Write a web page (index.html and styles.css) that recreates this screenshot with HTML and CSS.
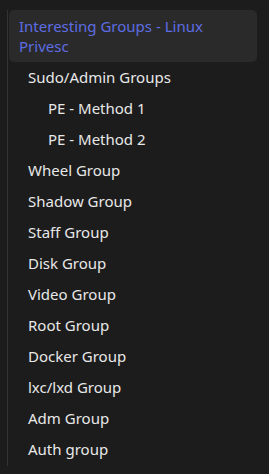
FILE: index.html
```html
<!DOCTYPE html>
<html lang="en">
<head>
    <meta charset="UTF-8">
    <title>Table of Contents</title>
    <link rel="stylesheet" href="styles.css">
</head>
<body>
<nav class="toc">
    <ul class="toc-list">
        <li><a class="toc-item active" href="#">Interesting Groups - Linux Privesc</a></li>
        <li><a class="toc-item lvl2" href="#">Sudo/Admin Groups</a></li>
        <li><a class="toc-item lvl3" href="#">PE - Method 1</a></li>
        <li><a class="toc-item lvl3" href="#">PE - Method 2</a></li>
        <li><a class="toc-item lvl2" href="#">Wheel Group</a></li>
        <li><a class="toc-item lvl2" href="#">Shadow Group</a></li>
        <li><a class="toc-item lvl2" href="#">Staff Group</a></li>
        <li><a class="toc-item lvl2" href="#">Disk Group</a></li>
        <li><a class="toc-item lvl2" href="#">Video Group</a></li>
        <li><a class="toc-item lvl2" href="#">Root Group</a></li>
        <li><a class="toc-item lvl2" href="#">Docker Group</a></li>
        <li><a class="toc-item lvl2" href="#">lxc/lxd Group</a></li>
        <li><a class="toc-item lvl2" href="#">Adm Group</a></li>
        <li><a class="toc-item lvl2" href="#">Auth group</a></li>
    </ul>
</nav>
</body>
</html>
```
FILE: styles.css
```css
html, body {
    margin: 0;
    background-color: #1c1c1c;
    font-family: "Noto Sans", "Open Sans", sans-serif;
}

.toc {
    padding: 10px 12px 10px 7px;
}

.toc-list {
    list-style: none;
    margin: 0;
    padding: 0 0 1px 1px;
    border-left: 1px solid #333333;
}

.toc-item {
    display: block;
    color: #e8e8e8;
    text-decoration: none;
    font-size: 15px;
    line-height: 31px;
}

.active {
    background-color: #2a2a2a;
    color: #5d6de3;
    border-radius: 5px;
    line-height: 20px;
    padding: 6px 10px 6px 10px;
}

.lvl2 {
    padding-left: 19px;
}

.lvl3 {
    padding-left: 39px;
}
```
